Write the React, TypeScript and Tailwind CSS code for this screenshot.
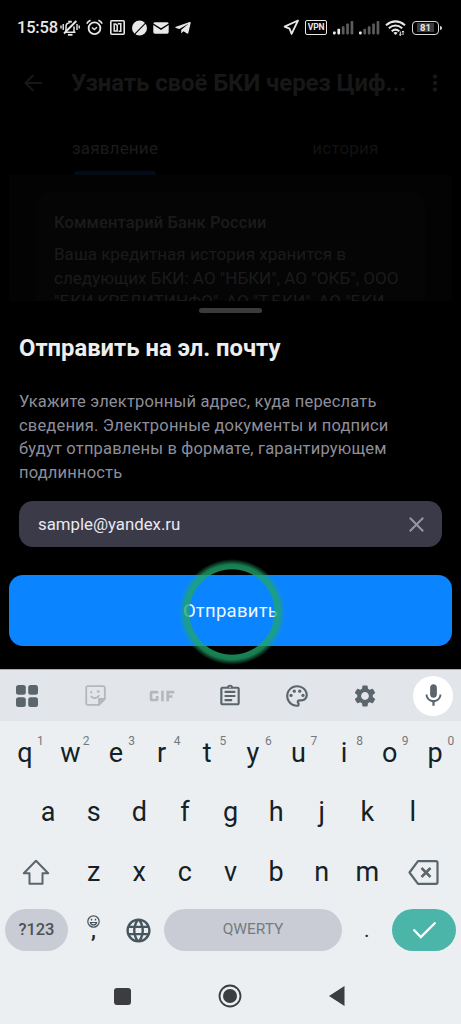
import React from 'react';
import {
  MdGif,
  MdLanguage,
  MdMic,
  MdMoreVert,
  MdOutlineAssignment,
  MdOutlinePalette,
  MdSettings,
} from 'react-icons/md';
import { FaTelegramPlane } from 'react-icons/fa';

const Signal = ({ level }: { level: number }) => (
  <svg width="21" height="14" viewBox="0 0 21 14">
    {[0, 1, 2, 3, 4].map((i) => (
      <rect
        key={i}
        x={i * 4.4}
        y={10.4 - i * 2.6}
        width="2.7"
        height={3 + i * 2.6}
        rx="0.8"
        fill={i < level ? '#ececec' : '#5c5c5c'}
      />
    ))}
  </svg>
);

const StatusBar = () => (
  <div className="flex h-[55px] shrink-0 items-center pl-[17px] text-[#e8e8e8]">
    <span className="w-[43px] whitespace-nowrap text-[16.5px] font-medium leading-5 tracking-[-0.2px]">15:58</span>
    {/* muted bell */}
    <svg width="20" height="18" viewBox="0 0 20 18" fill="none" stroke="currentColor" strokeWidth="1.5">
      <path d="M5 13.2h10.5M6 13V8a4 4 0 0 1 3-4.2V2.5h2v1.3M14 7.5V13" />
      <path d="M16.3 2 4 14.5" strokeWidth="1.9" />
      <path d="M1 6.5v3M3.2 5v6M17 5v6M19.2 6.5v3" strokeWidth="1.4" />
      <path d="M8 15.8h4.5" strokeWidth="1.8" />
    </svg>
    {/* alarm */}
    <svg className="ml-[6px]" width="17" height="17" viewBox="0 0 17 17" fill="none" stroke="currentColor" strokeWidth="1.8">
      <circle cx="8.5" cy="9.3" r="5.9" />
      <path d="M5.9 8.5l2.5 2.1L11 8.3" strokeWidth="1.4" />
      <path d="M.8 4.6Q2 2.1 4.6 1.2M16.2 4.6Q15 2.1 12.4 1.2" strokeWidth="1.6" />
    </svg>
    {/* nfc */}
    <svg className="ml-[7px]" width="15" height="15" viewBox="0 0 15 15" fill="none" stroke="currentColor" strokeWidth="1.6">
      <rect x=".8" y=".8" width="13.4" height="13.4" rx="1" />
      <path d="M4.2 3.3v7.8H7.200V5.400L5.200 3.600M7.800 3.800h3v7.500H8.600" strokeWidth="1.5" />
    </svg>
    {/* slashed disc */}
    <svg className="ml-[6px]" width="17" height="16" viewBox="0 0 17 16">
      <circle cx="8.5" cy="8" r="7.5" fill="currentColor" />
      <path d="M16 1.6 3 14.8" stroke="#000" strokeWidth="1.1" />
    </svg>
    {/* mail */}
    <svg className="ml-[5px]" width="16" height="12" viewBox="0 0 16 12">
      <rect x=".3" y=".3" width="15.4" height="11.4" rx="1.6" fill="currentColor" />
      <path d="M0 2 8 7.2 16 2" fill="none" stroke="#000" strokeWidth="1.4" />
    </svg>
    <FaTelegramPlane className="ml-[6px] h-[16px] w-[16px] scale-x-110" />

    {/* right group */}
    <svg className="ml-[92px]" width="17" height="17" viewBox="0 0 17 17" fill="none" stroke="currentColor" strokeWidth="1.8" strokeLinejoin="round">
      <path d="M15 1.5 1.6 7.6l5 2.1 2 5.2z" />
    </svg>
    <div className="ml-[5px] flex h-[15px] w-[22px] items-center justify-center rounded-[2px] border-[1.5px] border-[#e8e8e8] text-[8.5px] font-bold leading-none tracking-[-0.2px]">
      VPN
    </div>
    <div className="ml-[6px]"><Signal level={2} /></div>
    <div className="ml-[5px]"><Signal level={1} /></div>
    <svg className="ml-[5px]" width="21" height="16" viewBox="0 0 21 16" fill="none" stroke="currentColor" strokeWidth="2.1">
      <path d="M1 5.200Q10.500-2.300 20 5.200M3.800 8.200Q10.500 2.800 17.200 8.200M6.700 11.200Q10.500 8 14.300 11.200" />
      <path d="M8.300 12.700Q10.500 11.200 12.700 12.700L10.500 15z" fill="currentColor" stroke="none" />
      <path d="M15.300 11.500v4M18 11v4M14.200 14.300l1.100 1.200 1.100-1.200M17 12.200l1-1.200 1.100 1.200" strokeWidth="1" />
    </svg>
    <div className="ml-[6px] flex h-[14px] w-[27px] items-center justify-center rounded-[4px] border-[1.5px] border-[#d8d8d8]">
      <span className="bg-[#3c3c3c] px-[3px] text-[9.500px] font-bold leading-[9px]">81</span>
    </div>
    <div className="ml-px h-[4px] w-[2px] rounded-r bg-[#d8d8d8]" />
  </div>
);

const DimmedPage = () => (
  <div className="flex h-[246px] shrink-0 flex-col">
    <div className="flex h-[55px] items-center pl-[24px] text-[#171717]">
      <svg width="19" height="18" viewBox="0 0 19 18" fill="none" stroke="currentColor" strokeWidth="2">
        <path d="M18 9H2M9.500 1 1.500 9l8 8" />
      </svg>
      <h1 className="ml-[28px] w-[344px] whitespace-nowrap text-[24px] font-bold leading-7 tracking-[-0.100px]">Узнать своё БКИ через Циф...</h1>
      <MdMoreVert className="h-[26px] w-[26px] translate-x-[7px]" />
    </div>
    <div className="flex h-[65px] text-[17px] tracking-[0.200px]">
      <div className="flex w-[230px] flex-col items-center text-[#1b1b1b]">
        <span className="mt-[26px] leading-6">заявление</span>
        <div className="mt-auto h-[4px] w-[82px] rounded-t-[3px] bg-[#030c17]" />
      </div>
      <div className="flex w-[231px] flex-col items-center text-[#121212]">
        <span className="mt-[26px] leading-6">история</span>
      </div>
    </div>
    <div className="mx-[9px] flex-1 overflow-hidden bg-[#030303] px-[27px] pt-[17px]">
      <div className="h-[160px] rounded-[14px] bg-[#050505] px-[18px] pt-[19px] text-[17px] text-[#1b1b1b]">
        <p className="text-[16.500px] font-medium leading-6 tracking-[0.120px]">Комментарий Банк России</p>
        <p className="mt-[8px] whitespace-nowrap leading-[23.500px] tracking-[0.020px]">
          Ваша кредитная история хранится в
          <br />
          следующих БКИ: АО "НБКИ", АО "ОКБ", ООО
          <br />
          "БКИ КРЕДИТИНФО", АО "Т.БКИ", АО "БКИ
        </p>
      </div>
    </div>
  </div>
);

const SendSheet = () => (
  <div className="flex h-[368px] shrink-0 flex-col">
    <div className="mx-auto mt-[7px] h-[5px] w-[63px] rounded-full bg-[#3b3b3b]" />
    <h2 className="ml-[19px] mt-[21px] whitespace-nowrap text-[23.800px] font-bold leading-7 text-[#eeeeee]">Отправить на эл. почту</h2>
    <p className="ml-[19px] mt-[28px] whitespace-nowrap text-[16.500px] leading-[23.500px] tracking-[0.180px] text-[#8e8e9a]">
      Укажите электронный адрес, куда переслать
      <br />
      сведения. Электронные документы и подписи
      <br />
      будут отправлены в формате, гарантирующем
      <br />
      подлинность
    </p>
    <div className="mx-[19px] mt-[17px] flex h-[46px] shrink-0 items-center justify-between rounded-[14px] bg-[#3b3a49] pl-[19px] pr-[18px]">
      <span className="pt-[2px] text-[16.800px] text-[#e9e9ef]">sample@yandex.ru</span>
      <svg width="15" height="15" viewBox="0 0 15 15" stroke="#9797a3" strokeWidth="2">
        <path d="M.8.8l13.400 13.400M14.200.8.8 14.200" />
      </svg>
    </div>
    <div className="relative mx-[9px] mt-[28px] flex h-[71px] shrink-0 items-center justify-center rounded-[14px] bg-[#0a85ff]">
      <span className="pt-[3px] text-[18.500px] tracking-[0.250px] text-[#eef7ff]">Отправить</span>
      {/* tap highlight */}
      <svg className="absolute left-[168px] top-[-18px]" width="110" height="110" viewBox="0 0 110 110">
        <defs>
          <radialGradient id="tap" gradientUnits="userSpaceOnUse" cx="55" cy="55" r="54">
            <stop offset="0.780" stopColor="#22a876" stopOpacity="0" />
            <stop offset="0.800" stopColor="#20a56a" stopOpacity="0.800" />
            <stop offset="0.880" stopColor="#20a56a" stopOpacity="0.750" />
            <stop offset="0.980" stopColor="#20a56a" stopOpacity="0" />
          </radialGradient>
        </defs>
        <circle cx="55" cy="55" r="54" fill="url(#tap)" />
      </svg>
    </div>
  </div>
);

const Key = ({ char, hint }: { char: string; hint?: string }) => (
  <div className="relative flex w-[45.600px] items-center justify-center">
    <span>{char}</span>
    {hint && <span className="absolute left-[35px] top-[8px] text-[12px] leading-4 text-[#74797d]">{hint}</span>}
  </div>
);

const Keyboard = () => (
  <div className="flex flex-1 flex-col bg-[#ebeff2] text-[27px] text-[#142127]">
    <div className="flex h-[52px] shrink-0 items-center border-t border-[#a9abae] bg-[#e2e5ea] text-[#5b666c]">
      <svg className="ml-[16px]" width="22" height="22" viewBox="0 0 22 22" fill="currentColor">
        <rect width="9.800" height="9.800" rx="2.500" />
        <rect x="12.200" width="9.800" height="9.800" rx="2.500" />
        <rect y="12.200" width="9.800" height="9.800" rx="2.500" />
        <rect x="12.200" y="12.200" width="9.800" height="9.800" rx="2.500" />
      </svg>
      <svg className="ml-[47px] text-[#b4b8bb]" width="21" height="21" viewBox="0 0 21 21" fill="none" stroke="currentColor" strokeWidth="1.800">
        <path d="M3 1.200h15q1.800 0 1.800 1.800v11l-5.800 5.800H3q-1.800 0-1.800-1.800V3q0-1.800 1.800-1.800z" />
        <path d="M19.500 14h-5.500v5.500z" fill="currentColor" />
        <path d="M5.800 11.200q4.500 4.300 8.600-1M5.500 8l1.500-1.500M11.800 6.500h2.800" />
      </svg>
      <MdGif className="ml-[35px] h-[42px] w-[42px] text-[#b4b8bb]" />
      <MdOutlineAssignment className="ml-[34px] h-[26px] w-[26px] scale-y-[0.950]" />
      <MdOutlinePalette className="ml-[41px] h-[26px] w-[26px]" />
      <MdSettings className="ml-[42px] h-[26px] w-[26px]" />
      <div className="ml-[35px] flex h-[40px] w-[40px] items-center justify-center rounded-full bg-white">
        <MdMic className="h-[27px] w-[27px]" />
      </div>
    </div>
    <div className="flex h-[61px] justify-center pr-px pt-[4px]">
      {'qwertyuiop'.split('').map((char, i) => (
        <Key key={char} char={char} hint={String((i + 1) % 10)} />
      ))}
    </div>
    <div className="flex h-[60px] justify-center pt-px">
      {'asdfghjkl'.split('').map((char) => (
        <Key key={char} char={char} />
      ))}
    </div>
    <div className="flex h-[59px] justify-center pt-[2px]">
      <div className="flex w-[68px] shrink-0 items-center justify-center">
        <svg className="translate-x-[-1px]" width="28" height="27" viewBox="0 0 28 27" fill="none" stroke="#5b666c" strokeWidth="2" strokeLinejoin="round">
          <path d="M14 1.800 1.800 14.300h5.700v10.500h13V14.300h5.700z" />
        </svg>
      </div>
      {'zxcvbnm'.split('').map((char) => (
        <Key key={char} char={char} />
      ))}
      <div className="flex w-[68px] shrink-0 items-center justify-center">
        <svg className="translate-x-[-1px]" width="31" height="25" viewBox="0 0 31 25" fill="none" stroke="#5b666c" strokeWidth="2.200" strokeLinejoin="round">
          <path d="M10 1.200h18q1.500 0 1.500 1.500v19.600q0 1.500-1.500 1.500H10L1.500 12.500z" />
          <path d="m13.500 8 9 9M22.500 8l-9 9" strokeWidth="2.500" />
        </svg>
      </div>
    </div>
    <div className="mt-[8px] flex h-[42px] shrink-0 items-center">
      <div className="ml-[5px] flex h-[42px] w-[63px] items-center justify-center rounded-full bg-[#c9ccd4] text-[16.500px] font-medium tracking-[-0.100px] text-[#4a5258]">?123</div>
      <div className="ml-[18px] flex w-[15px] flex-col items-center">
        <svg width="13" height="13" viewBox="0 0 13 13" fill="none" stroke="#45515a" strokeWidth="1.200">
          <circle cx="6.500" cy="6.500" r="5.700" />
          <path d="M3.400 7.500a3.200 3.200 0 0 0 6.200 0z" />
          <path d="M4.500 3.800v1.600M8.500 3.800v1.600" strokeWidth="1.400" />
        </svg>
        <span className="h-[18px] text-[22px] font-medium leading-[6px] text-[#1f2327]">,</span>
      </div>
      <MdLanguage className="ml-[23px] h-[29px] w-[29px] text-[#46565d]" />
      <div className="ml-[11px] flex h-[42px] w-[178px] items-center justify-center rounded-full bg-[#c9ccd4] text-[15.500px] text-[#757b81]">QWERTY</div>
      <span className="ml-[22px] w-[7px] text-[21px] leading-6 text-[#1f2327]">.</span>
      <div className="ml-[21px] flex h-[42px] w-[64px] items-center justify-center rounded-full bg-[#4ab5a8]">
        <svg width="25" height="18" viewBox="0 0 25 18" fill="none" stroke="#fff" strokeWidth="2.300">
          <path d="M1.500 8.500 8.800 16 23.500 1.500" />
        </svg>
      </div>
    </div>
    <nav className="mt-[24px] flex h-[42px] items-center text-[#3b3d40]">
      <div className="ml-[114px] h-[17px] w-[17px] rounded-[3px] bg-[#3b3d40]" />
      <svg className="ml-[87px]" width="24" height="24" viewBox="0 0 24 24">
        <circle cx="12" cy="12" r="10.500" fill="none" stroke="currentColor" strokeWidth="1.800" />
        <circle cx="12" cy="12" r="7" fill="currentColor" />
      </svg>
      <svg className="ml-[87px]" width="17" height="20" viewBox="0 0 17 20" fill="currentColor">
        <path d="M15.500 0v20L0 10z" />
      </svg>
    </nav>
  </div>
);

export default function App() {
  return (
    <div className="flex h-[1024px] w-[461px] flex-col overflow-hidden bg-black font-[Roboto,sans-serif]">
      <StatusBar />
      <DimmedPage />
      <SendSheet />
      <Keyboard />
    </div>
  );
}
